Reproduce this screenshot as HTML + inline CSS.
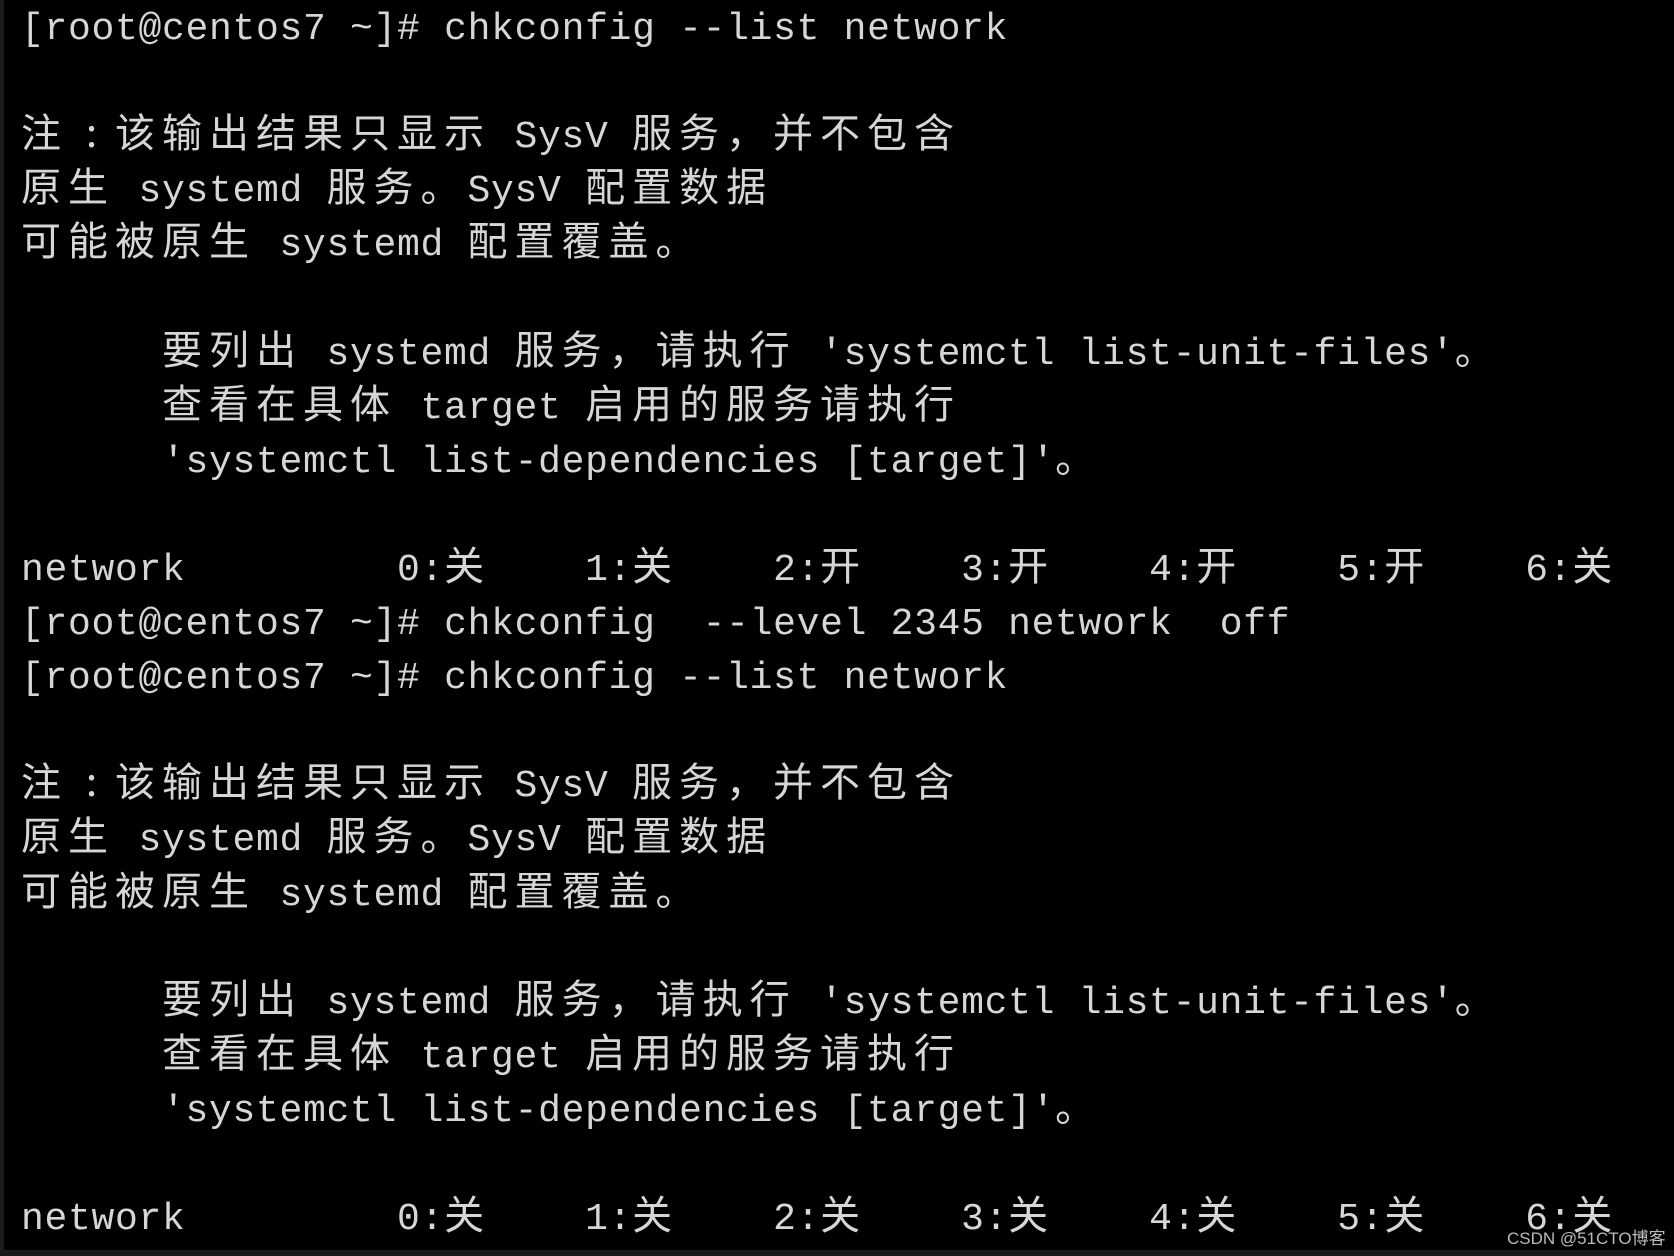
<!DOCTYPE html>
<html><head><meta charset="utf-8"><style>
html,body{margin:0;padding:0;background:#000;}
body{width:1674px;height:1256px;overflow:hidden;position:relative;}
.lb{position:absolute;left:0;top:0;width:4px;height:1256px;background:#1c1c1c;}
.bb{position:absolute;left:0;bottom:0;width:1674px;height:6px;background:#1a1a1a;}
pre{position:absolute;left:21px;top:3px;margin:0;font-family:"Liberation Mono",monospace;font-size:38px;letter-spacing:0.7px;line-height:54.1px;color:#d6d6d6;white-space:pre;}
.c{font-family:"Noto Sans CJK SC","WenQuanYi Zen Hei",sans-serif;font-size:40px;letter-spacing:7px;line-height:0;}
.k{display:inline-block;width:47px;text-align:center;letter-spacing:0;font-family:"Noto Sans CJK SC",sans-serif;font-size:40px;line-height:0;}
.wm{position:absolute;left:1507px;top:1224px;font-family:"Liberation Sans","Noto Sans CJK SC",sans-serif;font-size:17px;color:#bbb;}
</style></head><body>
<div class="lb"></div>
<pre>[root@centos7 ~]# chkconfig --list network

<span class="c">注</span><span class="k">:</span><span class="c">该输出结果只显示</span> SysV <span class="c">服务，并不包含</span>
<span class="c">原生</span> systemd <span class="c">服务。</span>SysV <span class="c">配置数据</span>
<span class="c">可能被原生</span> systemd <span class="c">配置覆盖。</span>

      <span class="c">要列出</span> systemd <span class="c">服务，请执行</span> 'systemctl list-unit-files'<span class="c">。</span>
      <span class="c">查看在具体</span> target <span class="c">启用的服务请执行</span>
      'systemctl list-dependencies [target]'<span class="c">。</span>

network         0:<span class="c">关</span>    1:<span class="c">关</span>    2:<span class="c">开</span>    3:<span class="c">开</span>    4:<span class="c">开</span>    5:<span class="c">开</span>    6:<span class="c">关</span>
[root@centos7 ~]# chkconfig  --level 2345 network  off
[root@centos7 ~]# chkconfig --list network

<span class="c">注</span><span class="k">:</span><span class="c">该输出结果只显示</span> SysV <span class="c">服务，并不包含</span>
<span class="c">原生</span> systemd <span class="c">服务。</span>SysV <span class="c">配置数据</span>
<span class="c">可能被原生</span> systemd <span class="c">配置覆盖。</span>

      <span class="c">要列出</span> systemd <span class="c">服务，请执行</span> 'systemctl list-unit-files'<span class="c">。</span>
      <span class="c">查看在具体</span> target <span class="c">启用的服务请执行</span>
      'systemctl list-dependencies [target]'<span class="c">。</span>

network         0:<span class="c">关</span>    1:<span class="c">关</span>    2:<span class="c">关</span>    3:<span class="c">关</span>    4:<span class="c">关</span>    5:<span class="c">关</span>    6:<span class="c">关</span></pre>
<div class="wm">CSDN @51CTO博客</div>
<div class="bb"></div>
</body></html>
